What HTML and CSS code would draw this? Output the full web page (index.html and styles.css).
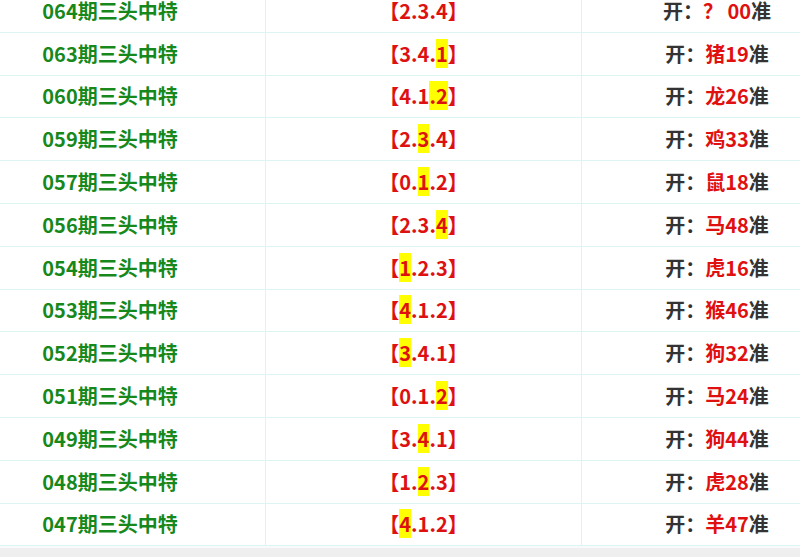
FILE: index.html
```html
<!DOCTYPE html>
<html lang="zh-CN">
<head>
  <meta charset="UTF-8">
  <meta name="viewport" content="width=device-width, initial-scale=1.0">
  <title>三头中特</title>
  <link rel="stylesheet" href="styles.css">
</head>
<body>
  <div class="board">
    <table class="record">
      <tr>
        <td class="issue">064期三头中特</td>
        <td class="pick">【2.3.4】</td>
        <td class="open">开：<span class="hit">？ 00</span>准</td>
      </tr>
      <tr>
        <td class="issue">063期三头中特</td>
        <td class="pick">【3.4.<span class="mark">1</span>】</td>
        <td class="open">开：<span class="hit">猪19</span>准</td>
      </tr>
      <tr>
        <td class="issue">060期三头中特</td>
        <td class="pick">【4.1<span class="mark">.2</span>】</td>
        <td class="open">开：<span class="hit">龙26</span>准</td>
      </tr>
      <tr>
        <td class="issue">059期三头中特</td>
        <td class="pick">【2.<span class="mark">3</span>.4】</td>
        <td class="open">开：<span class="hit">鸡33</span>准</td>
      </tr>
      <tr>
        <td class="issue">057期三头中特</td>
        <td class="pick">【0.<span class="mark">1</span>.2】</td>
        <td class="open">开：<span class="hit">鼠18</span>准</td>
      </tr>
      <tr>
        <td class="issue">056期三头中特</td>
        <td class="pick">【2.3.<span class="mark">4</span>】</td>
        <td class="open">开：<span class="hit">马48</span>准</td>
      </tr>
      <tr>
        <td class="issue">054期三头中特</td>
        <td class="pick">【<span class="mark">1</span>.2.3】</td>
        <td class="open">开：<span class="hit">虎16</span>准</td>
      </tr>
      <tr>
        <td class="issue">053期三头中特</td>
        <td class="pick">【<span class="mark">4</span>.1.2】</td>
        <td class="open">开：<span class="hit">猴46</span>准</td>
      </tr>
      <tr>
        <td class="issue">052期三头中特</td>
        <td class="pick">【<span class="mark">3</span>.4.1】</td>
        <td class="open">开：<span class="hit">狗32</span>准</td>
      </tr>
      <tr>
        <td class="issue">051期三头中特</td>
        <td class="pick">【0.1.<span class="mark">2</span>】</td>
        <td class="open">开：<span class="hit">马24</span>准</td>
      </tr>
      <tr>
        <td class="issue">049期三头中特</td>
        <td class="pick">【3.<span class="mark">4</span>.1】</td>
        <td class="open">开：<span class="hit">狗44</span>准</td>
      </tr>
      <tr>
        <td class="issue">048期三头中特</td>
        <td class="pick">【1.<span class="mark">2</span>.3】</td>
        <td class="open">开：<span class="hit">虎28</span>准</td>
      </tr>
      <tr>
        <td class="issue">047期三头中特</td>
        <td class="pick">【<span class="mark">4</span>.1.2】</td>
        <td class="open">开：<span class="hit">羊47</span>准</td>
      </tr>
    </table>
  </div>
</body>
</html>
```

FILE: styles.css
```css
body {
  margin: 0;
  background-color: #efefef;
  font-family: "Noto Sans CJK SC", "Noto Sans", sans-serif;
  overflow: hidden;
}

.board {
  margin: -9px 0 0 -46px;
  width: 899px;
  background-color: #fff;
  border-bottom: 2px solid #f7fbfb;
}

.record {
  width: 100%;
  border-collapse: collapse;
  table-layout: fixed;
}

.record td {
  height: 41.8px;
  padding: 0;
  border: 1px solid #def3f4;
  text-align: center;
  font-size: 20px;
  font-weight: bold;
  line-height: 26px;
}

.record tr:first-child td {
  height: 40.8px;
  border-top: none;
}

.issue {
  width: 310px;
  color: #16881c;
}

.pick {
  width: 315px;
  color: #dd1111;
}

.open {
  color: #333;
}

.hit {
  color: #e01010;
}

.mark {
  background-color: #ffff00;
}
```
